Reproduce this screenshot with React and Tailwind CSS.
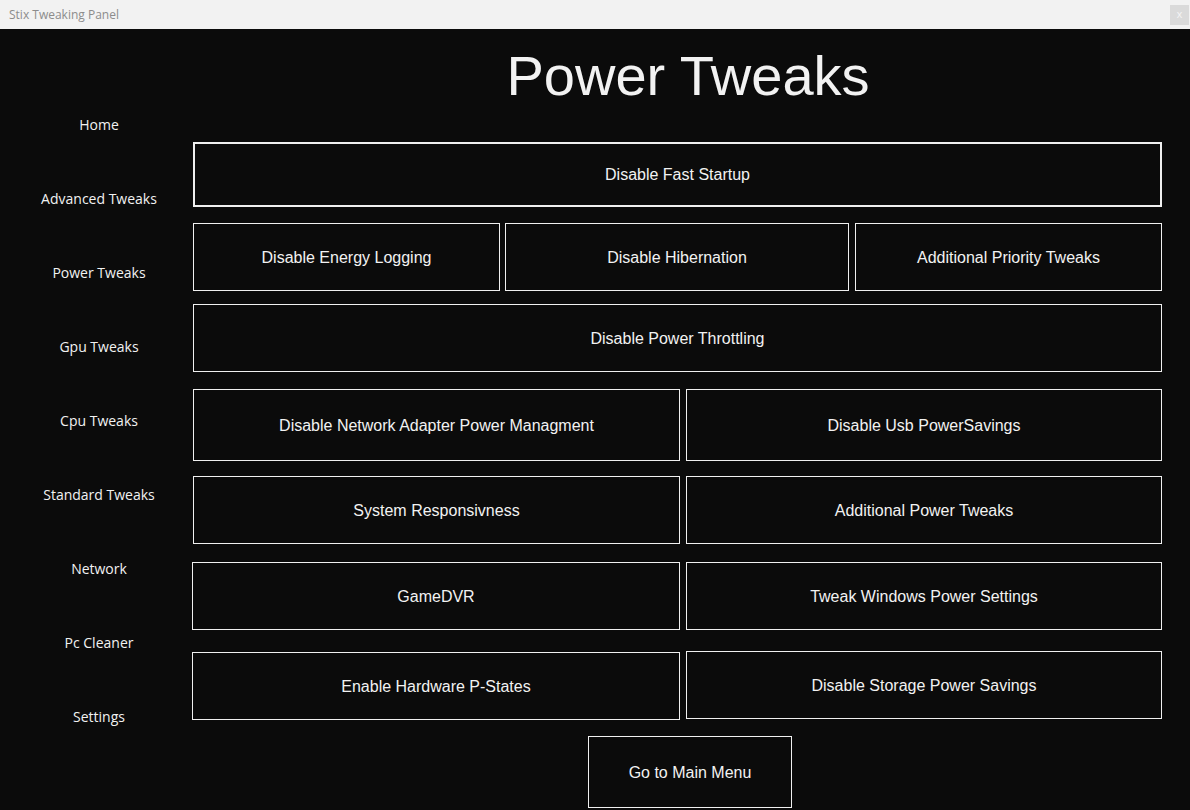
const sideItems = [
  "Home",
  "Advanced Tweaks",
  "Power Tweaks",
  "Gpu Tweaks",
  "Cpu Tweaks",
  "Standard Tweaks",
  "Network",
  "Pc Cleaner",
  "Settings",
];

function TweakButton({ label, className = "" }) {
  return (
    <button
      className={`flex shrink-0 items-center justify-center border border-[#f0f0f0] bg-[#0b0b0b] text-[16px] text-[#f2f2f2] ${className}`}
    >
      {label}
    </button>
  );
}

export default function App() {
  return (
    <div className="h-[810px] w-[1190px] overflow-hidden bg-[#0b0b0b] font-['Liberation_Sans',Arial,sans-serif]">
      {/* Title bar */}
      <div className="flex h-[29px] items-center justify-between bg-[#f2f2f2] pl-[9px] pr-px">
        <span className="font-['Open_Sans',sans-serif] text-[12px] text-[#8c8c8c]">Stix Tweaking Panel</span>
        <div className="flex h-[20px] w-[19px] items-center justify-center bg-[#dadada] text-[11px] leading-none text-[#f4f4f4]">
          x
        </div>
      </div>

      <div className="flex">
        {/* Sidebar */}
        <nav className="flex w-[193px] shrink-0 flex-col pt-[58px] pl-[5px]">
          {sideItems.map((item) => (
            <div
              key={item}
              className="flex h-[74px] items-center justify-center font-['Open_Sans',sans-serif] text-[14px] text-[#f2f2f2]"
            >
              {item}
            </div>
          ))}
        </nav>

        {/* Main */}
        <main className="flex w-[969px] flex-col">
          <h1 className="mt-[19px] pl-[21px] text-center text-[56px] leading-none font-normal text-[#f2f2f2]">
            Power Tweaks
          </h1>

          <TweakButton label="Disable Fast Startup" className="mt-[38px] h-[65px] w-[969px] border-2" />

          <div className="mt-[16px] flex gap-[5px]">
            <TweakButton label="Disable Energy Logging" className="h-[68px] w-[307px] pt-[2px]" />
            <TweakButton label="Disable Hibernation" className="h-[68px] w-[344px] pt-[2px]" />
            <TweakButton label="Additional Priority Tweaks" className="ml-px h-[68px] w-[307px] pt-[2px]" />
          </div>

          <TweakButton label="Disable Power Throttling" className="mt-[13px] h-[68px] w-[969px] pt-[2px]" />

          <div className="mt-[17px] flex gap-[6px]">
            <TweakButton label="Disable Network Adapter Power Managment" className="h-[72px] w-[487px] pt-[2px]" />
            <TweakButton label="Disable Usb PowerSavings" className="h-[72px] w-[476px] pt-[2px]" />
          </div>

          <div className="mt-[15px] flex gap-[6px]">
            <TweakButton label="System Responsivness" className="h-[68px] w-[487px] pt-[2px]" />
            <TweakButton label="Additional Power Tweaks" className="h-[68px] w-[476px] pt-[2px]" />
          </div>

          <div className="mt-[18px] -ml-px flex gap-[6px]">
            <TweakButton label="GameDVR" className="h-[68px] w-[488px] pt-[2px]" />
            <TweakButton label="Tweak Windows Power Settings" className="h-[68px] w-[476px] pt-[2px]" />
          </div>

          <div className="mt-[21px] -ml-px flex items-start gap-[6px]">
            <TweakButton label="Enable Hardware P-States" className="mt-px h-[68px] w-[488px] pt-[2px]" />
            <TweakButton label="Disable Storage Power Savings" className="h-[68px] w-[476px] pt-[2px]" />
          </div>

          <TweakButton label="Go to Main Menu" className="mt-[16px] ml-[395px] h-[72px] w-[204px] pt-[2px]" />
        </main>
      </div>
    </div>
  );
}
